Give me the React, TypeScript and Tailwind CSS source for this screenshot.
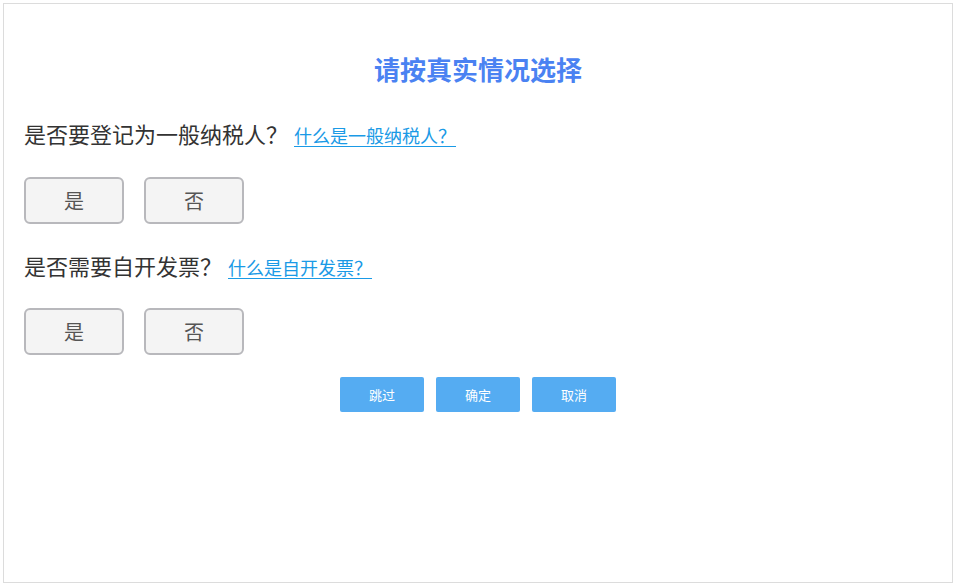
import React from "react"

const font = { fontFamily: '"Noto Sans CJK SC", "Noto Sans", sans-serif' }

type Question = { text: string; link: string }

const questions: Question[] = [
  { text: "是否要登记为一般纳税人？", link: "什么是一般纳税人？" },
  { text: "是否需要自开发票？", link: "什么是自开发票？" },
]

const ChoiceButton = ({ label }: { label: string }) => (
  <button
    type="button"
    className="w-[100px] h-[47px] rounded-[6px] border-2 border-[#b8b8bc] bg-[#f4f4f4] text-[20px] text-[#555] leading-none"
  >
    {label}
  </button>
)

const ActionButton = ({ label }: { label: string }) => (
  <button
    type="button"
    className="w-[84px] h-[35px] rounded-[2px] bg-[#55acf2] text-white text-[13px] leading-none"
  >
    {label}
  </button>
)

export default function App() {
  return (
    <div className="pt-[3px] pl-[3px] pr-[2px] bg-white" style={font}>
      <div className="h-[580px] border border-[#dcdcdc] bg-white px-[20px]">
        <h1 className="mt-[47px] h-[36px] leading-[36px] text-center text-[26px] font-bold text-[#4a82f2]">
          请按真实情况选择
        </h1>

        {questions.map((q, i) => (
          <div key={q.text} className={i === 0 ? "mt-[31px]" : "mt-[26px]"}>
            <div className="flex items-baseline h-[30px] leading-[30px]">
              <span className="text-[22px] text-[#333]">{q.text}</span>
              <a href="#" className="ml-[6px] text-[18px] text-[#1a9ae6] underline underline-offset-[3px]">
                {q.link}
              </a>
            </div>
            <div className={i === 0 ? "mt-[29px] flex gap-[20px]" : "mt-[28px] flex gap-[20px]"}>
              <ChoiceButton label="是" />
              <ChoiceButton label="否" />
            </div>
          </div>
        ))}

        <div className="mt-[22px] flex justify-center gap-[12px]">
          <ActionButton label="跳过" />
          <ActionButton label="确定" />
          <ActionButton label="取消" />
        </div>
      </div>
    </div>
  )
}
